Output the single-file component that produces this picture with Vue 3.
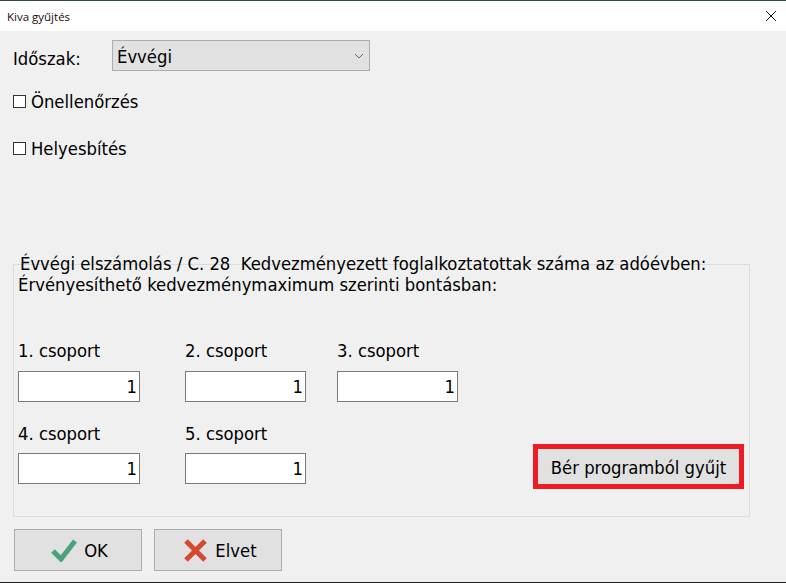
<script setup>
const rowOne = ['1. csoport', '2. csoport', '3. csoport']
const rowTwo = ['4. csoport', '5. csoport']
</script>

<template>
  <div class="window">
    <header class="titlebar">
      <span>Kiva gyűjtés</span>
      <svg class="close" width="12" height="12" viewBox="0 0 12 12"><path d="M1 1 L11 11 M11 1 L1 11" stroke="#111" stroke-width="1" fill="none" /></svg>
    </header>
    <main class="body">
      <div class="period">
        <span class="period-label">Időszak:</span>
        <div class="select">
          <span>Évvégi</span>
          <svg width="10" height="6" viewBox="0 0 10 6"><path d="M1 1 L5 5 L9 1" stroke="#666" fill="none" /></svg>
        </div>
      </div>
      <label class="check first"><span class="box"></span>Önellenőrzés</label>
      <label class="check second"><span class="box"></span>Helyesbítés</label>
      <section class="group">
        <div class="legend">Évvégi elszámolás / C. 28&nbsp; Kedvezményezett foglalkoztatottak száma az adóévben:</div>
        <div class="sub">Érvényesíthető kedvezménymaximum szerinti bontásban:</div>
        <div class="fields">
          <div v-for="(t, i) in rowOne" :key="t" class="field" :class="'c' + i">
            <span>{{ t }}</span>
            <div class="input">1</div>
          </div>
        </div>
        <div class="fields lower">
          <div v-for="(t, i) in rowTwo" :key="t" class="field" :class="'c' + i">
            <span>{{ t }}</span>
            <div class="input">1</div>
          </div>
          <div class="collect">Bér programból gyűjt</div>
        </div>
      </section>
      <div class="actions">
        <button class="btn">
          <svg class="ok-icon" width="26" height="23" viewBox="0 0 26 23"><path d="M2 12 L10 20 L24 2" stroke="#4aa27d" stroke-width="5" fill="none" /></svg>
          OK
        </button>
        <button class="btn">
          <svg width="23" height="23" viewBox="0 0 23 23"><path d="M2 2 L21 21 M21 2 L2 21" stroke="#d5492f" stroke-width="5" fill="none" /></svg>
          Elvet
        </button>
      </div>
    </main>
    <div class="bottom-line"></div>
  </div>
</template>

<style>
html, body { margin: 0; background: #f0f0f0; overflow: hidden; }
</style>

<style scoped>
.window {
  width: 786px;
  height: 583px;
  display: flex;
  flex-direction: column;
  box-sizing: border-box;
  border-top: 1px solid #2f4a44;
  background: #f0f0f0;
  font-family: "DejaVu Sans Condensed", "DejaVu Sans", sans-serif;
  font-size: 18.3px;
  color: #000;
}
.titlebar {
  height: 30px;
  flex: none;
  background: #fff;
  display: flex;
  align-items: center;
  justify-content: space-between;
  padding: 0 8px 0 7px;
  font-family: "Open Sans", sans-serif;
  font-size: 11.5px;
  color: #1a0a10;
}
.close { margin-right: 1px; }
.body {
  flex: 1;
  display: flex;
  flex-direction: column;
  padding: 9px 36px 0 13px;
}
.period { display: flex; align-items: flex-start; height: 31px; }
.period-label { width: 99px; padding-top: 9px; line-height: 20px; }
.select {
  width: 258px;
  height: 31px;
  box-sizing: border-box;
  border: 1px solid #adadad;
  background: #e1e1e1;
  display: flex;
  align-items: center;
  justify-content: space-between;
  padding: 1px 5px 0 4px;
}
.check { display: flex; align-items: center; gap: 5px; height: 20px; }
.first { margin-top: 20px; }
.second { margin-top: 27px; }
.box {
  width: 13px;
  height: 13px;
  box-sizing: border-box;
  border: 1px solid #333;
  background: #fff;
}
.group {
  margin-top: 106px;
  height: 253px;
  flex: none;
  box-sizing: border-box;
  border: 1px solid #dcdcdc;
  padding: 0 4px;
  display: flex;
  flex-direction: column;
}
.legend { margin: -11px 0 0 2px; line-height: 20px; white-space: nowrap; }
.sub { line-height: 20px; margin-top: 1px; white-space: nowrap; }
.fields { display: flex; margin-top: 46px; position: relative; }
.lower { margin-top: 22px; flex: 1; }
.field { display: flex; flex-direction: column; gap: 10px; line-height: 20px; }
.lower .field { gap: 9px; }
.field.c0 { width: 167px; }
.field.c1 { width: 152px; }
.input {
  width: 122px;
  height: 31px;
  box-sizing: border-box;
  border: 1px solid #7a7a7a;
  background: #fff;
  text-align: right;
  padding: 5px 2px 0 0;
  line-height: 20px;
}
.field.c1 .input { width: 121px; }
.field.c2 .input { width: 121px; }
.collect {
  position: absolute;
  left: 515px;
  top: 20px;
  width: 211px;
  height: 45px;
  box-sizing: border-box;
  border: 5px solid #ed1c24;
  background: #e1e1e1;
  display: flex;
  align-items: center;
  justify-content: center;
  white-space: nowrap;
  padding-top: 2px;
}
.actions { display: flex; gap: 12px; margin: 12px 0 0 1px; }
.btn {
  width: 128px;
  height: 42px;
  box-sizing: border-box;
  border: 1px solid #adadad;
  background: #e1e1e1;
  font: inherit;
  color: #000;
  display: flex;
  align-items: center;
  justify-content: center;
  gap: 8px;
  padding: 0 0 0 5px;
}
.ok-icon { margin: 0 -1px 0 -2px; }
.bottom-line { height: 1px; flex: none; background: #222; }
</style>
